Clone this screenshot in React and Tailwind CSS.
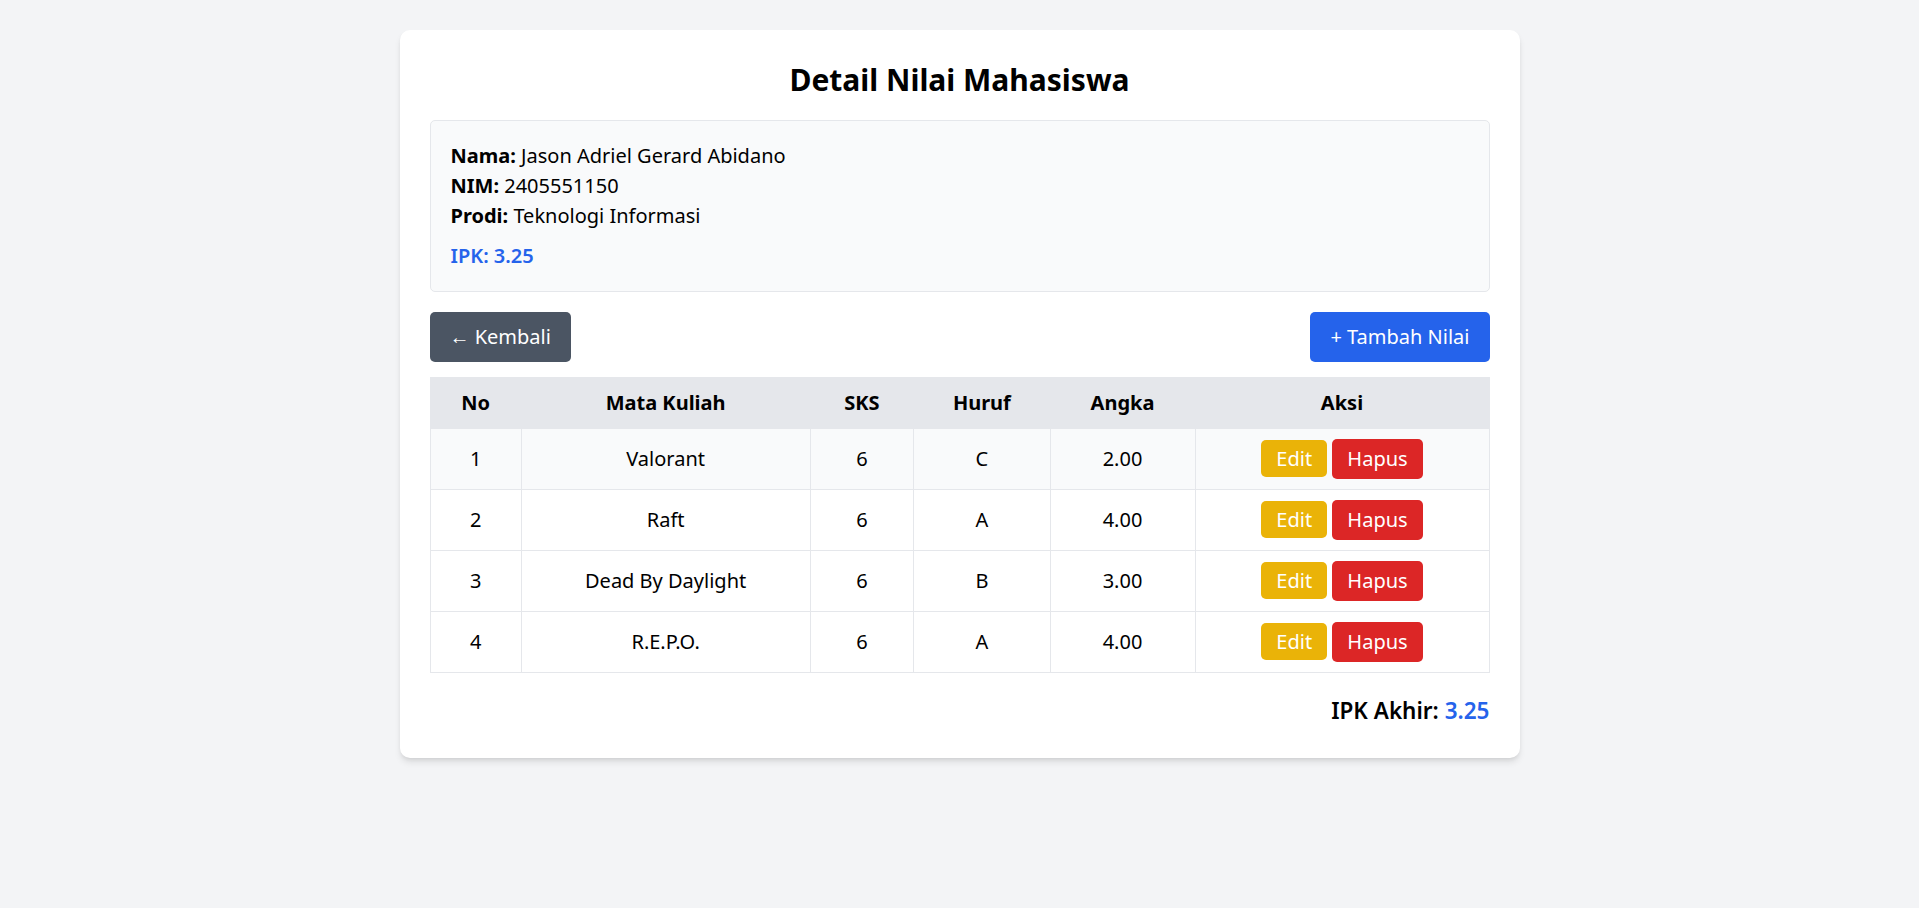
import React from 'react';

const nilai = [
  { id: 1, mk: 'Valorant', sks: 6, huruf: 'C', angka: '2.00' },
  { id: 2, mk: 'Raft', sks: 6, huruf: 'A', angka: '4.00' },
  { id: 3, mk: 'Dead By Daylight', sks: 6, huruf: 'B', angka: '3.00' },
  { id: 4, mk: 'R.E.P.O.', sks: 6, huruf: 'A', angka: '4.00' },
];

const DetailNilai = () => {
  return (
    <div className="max-w-4xl mx-auto bg-white p-6 rounded-lg shadow-md">
      <h1 className="text-2xl font-bold text-center mb-4">Detail Nilai Mahasiswa</h1>

      {/* info mahasiswa */}
      <div className="bg-[#f9fafb] border border-[#e5e7eb] rounded p-4 mb-4">
        <p><span className="font-bold">Nama:</span> Jason Adriel Gerard Abidano</p>
        <p><span className="font-bold">NIM:</span> 2405551150</p>
        <p><span className="font-bold">Prodi:</span> Teknologi Informasi</p>
        <p className="mt-2 text-[#2563eb] font-semibold">IPK: 3.25</p>
      </div>

      <div className="flex justify-between mb-3">
        <button className="px-4 py-2 rounded text-white bg-[#4b5563] hover:bg-[#374151]">← Kembali</button>
        <button className="px-4 py-2 rounded text-white bg-[#2563eb] hover:bg-[#1d4ed8]">+ Tambah Nilai</button>
      </div>

      {/* tabel nilai */}
      <table className="w-full border border-[#e5e7eb] text-center">
        <thead className="bg-[#e5e7eb]">
          <tr>
            <th className="p-2 border border-[#e5e7eb] w-[73px]">No</th>
            <th className="p-2 border border-[#e5e7eb] w-[231px]">Mata Kuliah</th>
            <th className="p-2 border border-[#e5e7eb] w-[83px]">SKS</th>
            <th className="p-2 border border-[#e5e7eb] w-[109px]">Huruf</th>
            <th className="p-2 border border-[#e5e7eb] w-[116px]">Angka</th>
            <th className="p-2 border border-[#e5e7eb]">Aksi</th>
          </tr>
        </thead>
        <tbody>
          {nilai.map((n, i) => (
            <tr key={n.id} className={i === 0 ? 'bg-[#f9fafb]' : 'bg-white hover:bg-[#f9fafb]'}>
              <td className="p-2 border border-[#e5e7eb]">{i + 1}</td>
              <td className="p-2 border border-[#e5e7eb]">{n.mk}</td>
              <td className="p-2 border border-[#e5e7eb]">{n.sks}</td>
              <td className="p-2 border border-[#e5e7eb]">{n.huruf}</td>
              <td className="p-2 border border-[#e5e7eb]">{n.angka}</td>
              <td className="p-2 border border-[#e5e7eb]">
                <a href="#" className="px-3 py-1 rounded text-white bg-[#eab308]">Edit</a>{' '}
                <button className="px-3 py-1 rounded text-white bg-[#dc2626]">Hapus</button>
              </td>
            </tr>
          ))}
        </tbody>
      </table>

      <div className="mt-4 text-right text-lg font-semibold">
        IPK Akhir: <span className="text-[#2563eb]">3.25</span>
      </div>
    </div>
  );
};

export default function App() {
  return (
    <div className="min-h-screen bg-[#f3f4f6] font-['Segoe_UI','Noto_Sans',sans-serif] text-black">
      {/* halaman di-render dengan zoom 125% */}
      <div className="[zoom:1.25] pt-6 pb-6">
        <DetailNilai />
      </div>
    </div>
  );
}
